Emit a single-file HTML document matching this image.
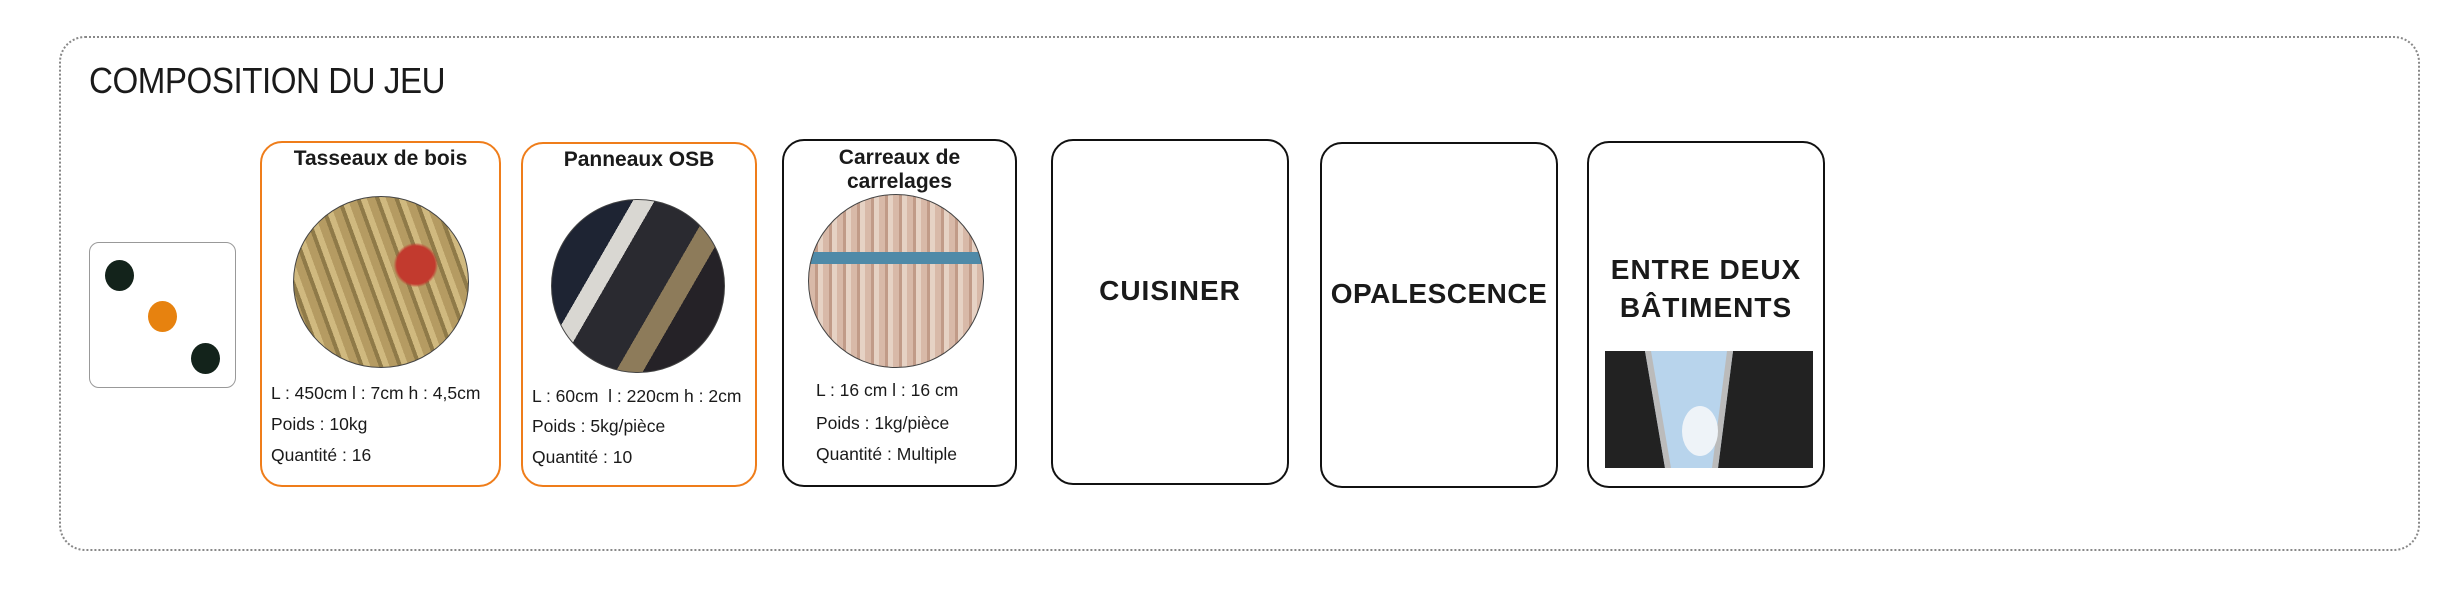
<!DOCTYPE html>
<html><head><meta charset="utf-8"><style>
body{margin:0;width:2452px;height:606px;background:#fff;position:relative;overflow:hidden;font-family:"Liberation Sans",sans-serif;color:#1a1a1a}
.frame{position:absolute;left:59px;top:36px;width:2361px;height:515px;border:2px dotted #888;border-radius:26px;box-sizing:border-box}
.title{position:absolute;left:89px;top:60px;font-size:36px;transform:scaleX(.92);transform-origin:left;font-weight:normal;letter-spacing:-.5px}
.dice{position:absolute;left:89px;top:242px;width:147px;height:146px;border:1.5px solid #999;border-radius:10px;box-sizing:border-box}
.dot{position:absolute;width:29px;height:31px;border-radius:50%;background:#13231b}
.card{position:absolute;border:2.5px solid #111;border-radius:22px;box-sizing:border-box}
.or{border-color:#ef7d1a}
.ct{position:absolute;left:0;right:0;text-align:center;font-weight:bold;font-size:21px;line-height:24px}
.circ{position:absolute;border-radius:50%;border:1px solid #444}
.ln{position:absolute;font-size:17.5px;white-space:nowrap}
.big{position:absolute;left:0;right:0;text-align:center;font-weight:bold;font-size:28px;letter-spacing:1px;line-height:38px}
</style></head><body>
<div class="frame"></div>
<div class="title">COMPOSITION DU JEU</div>
<div class="dice">
 <div class="dot" style="left:15px;top:17px"></div>
 <div class="dot" style="left:58px;top:58px;background:#e7820f"></div>
 <div class="dot" style="left:101px;top:100px"></div>
</div>

<div class="card or" style="left:260px;top:141px;width:241px;height:346px">
 <div class="ct" style="top:4px">Tasseaux de bois</div>
 <div class="circ" style="left:31px;top:53px;width:174px;height:170px;background:radial-gradient(circle at 70% 40%,#c23a2e 0 12%,transparent 14%),repeating-linear-gradient(70deg,#b59b62 0 8px,#8f7a48 8px 12px,#d0b97f 12px 18px),#9b8a64"></div>
 <div class="ln" style="left:9px;top:240px">L : 450cm l : 7cm h : 4,5cm</div>
 <div class="ln" style="left:9px;top:271px">Poids : 10kg</div>
 <div class="ln" style="left:9px;top:302px">Quantité : 16</div>
</div>

<div class="card or" style="left:521px;top:142px;width:236px;height:345px">
 <div class="ct" style="top:4px">Panneaux OSB</div>
 <div class="circ" style="left:28px;top:55px;width:172px;height:172px;background:linear-gradient(120deg,#1e2433 0 30%,#d9d7d2 30% 38%,#2a2a30 38% 60%,#8d7b5a 60% 70%,#252227 70%)"></div>
 <div class="ln" style="left:9px;top:242px">L : 60cm&nbsp; l : 220cm h : 2cm</div>
 <div class="ln" style="left:9px;top:272px">Poids : 5kg/pièce</div>
 <div class="ln" style="left:9px;top:303px">Quantité : 10</div>
</div>

<div class="card" style="left:782px;top:139px;width:235px;height:348px">
 <div class="ct" style="top:5px">Carreaux de<br>carrelages</div>
 <div class="circ" style="left:24px;top:53px;width:174px;height:172px;background:linear-gradient(180deg,transparent 0 33%,#4f8aa8 33% 40%,transparent 40%),repeating-linear-gradient(90deg,#d8b9a8 0 6px,#c19b88 6px 9px,#e6d2c4 9px 14px)"></div>
 <div class="ln" style="left:32px;top:239px">L : 16 cm l : 16 cm</div>
 <div class="ln" style="left:32px;top:272px">Poids : 1kg/pièce</div>
 <div class="ln" style="left:32px;top:303px">Quantité : Multiple</div>
</div>

<div class="card" style="left:1051px;top:139px;width:238px;height:346px">
 <div class="big" style="top:131px">CUISINER</div>
</div>
<div class="card" style="left:1320px;top:142px;width:238px;height:346px">
 <div class="big" style="top:131px;letter-spacing:.5px">OPALESCENCE</div>
</div>
<div class="card" style="left:1587px;top:141px;width:238px;height:347px">
 <div class="big" style="top:108px">ENTRE DEUX<br>BÂTIMENTS</div>
 <div style="position:absolute;left:16px;top:208px;width:208px;height:117px;background:#222;overflow:hidden">
  <svg width="208" height="117"><polygon points="40,0 128,0 113,117 60,117" fill="#b8d4ec"/><polygon points="40,0 46,0 66,117 60,117" fill="#bbb"/><polygon points="122,0 128,0 113,117 107,117" fill="#bbb"/><ellipse cx="95" cy="80" rx="18" ry="25" fill="#eef3f8"/></svg>
 </div>
</div>
</body></html>
